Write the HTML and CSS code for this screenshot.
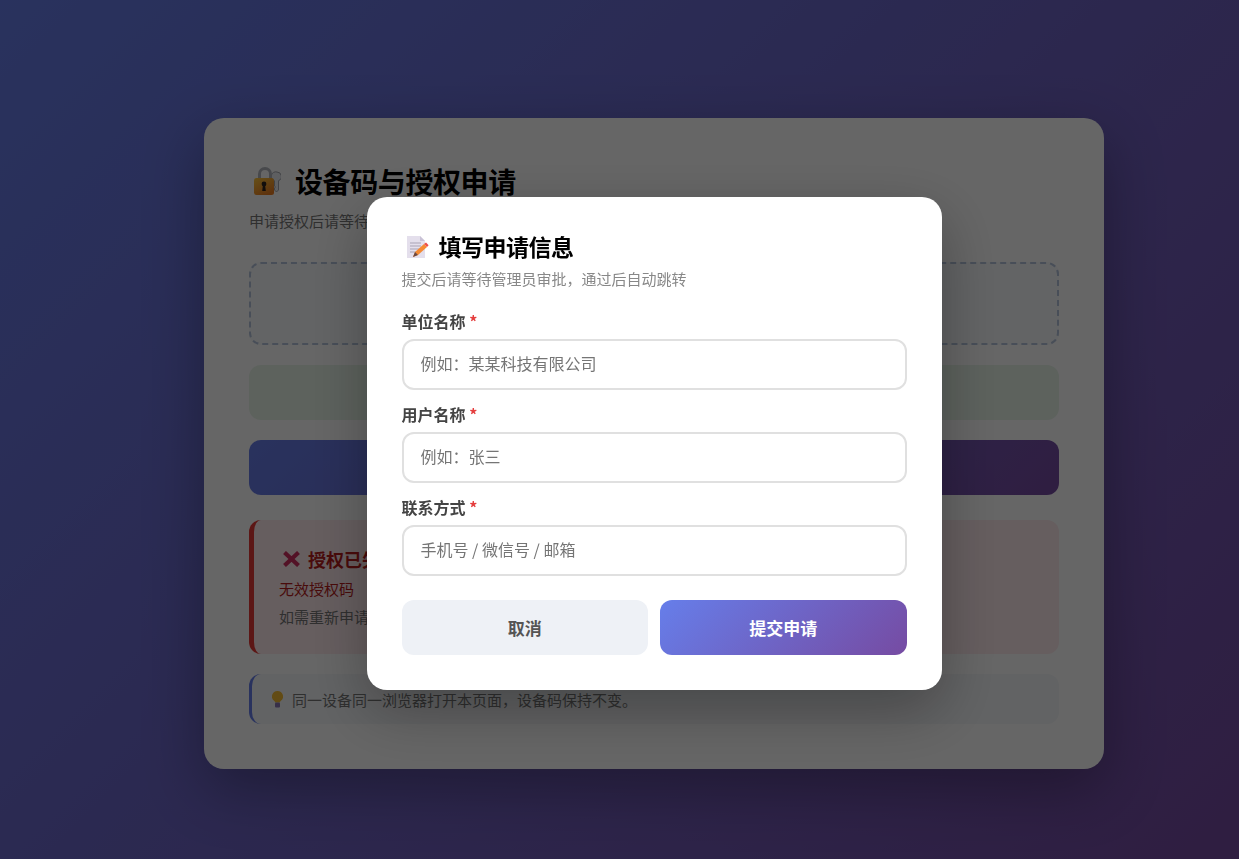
FILE: index.html
```html
<!DOCTYPE html>
<html lang="zh-CN">

<head>
    <meta charset="UTF-8">
    <meta name="viewport" content="width=device-width, initial-scale=1.0">
    <title>设备码与授权申请</title>
    <link rel="stylesheet" href="styles.css">
</head>

<body>
    <div class="card">
        <h1 class="card-title">
            <svg class="title-icon" viewBox="0 0 28 30">
                <defs>
                    <linearGradient id="lockBody" x1="0" y1="0" x2="0.6" y2="1">
                        <stop offset="0" stop-color="#ffc83d" />
                        <stop offset="1" stop-color="#ec7e22" />
                    </linearGradient>
                </defs>
                <path d="M24 6a4.500 4.500 0 0 1 1.500 8.700V24l-2 2-2-2v-2l1-1-1-1v-5.300A4.500 4.500 0 0 1 24 6z" fill="#eceef2" stroke="#8f929b" stroke-width="0.8" />
                <path d="M6.500 13V8a5.500 5.500 0 0 1 11 0v5" fill="none" stroke="#b4b7bf" stroke-width="3" />
                <rect x="1" y="12" width="20" height="17" rx="2.500" fill="url(#lockBody)" />
                <circle cx="11" cy="18" r="2.400" fill="#2e2420" />
                <path d="M10 18.500h2l.8 6.500H9.200z" fill="#2e2420" />
            </svg>
            设备码与授权申请
        </h1>
        <p class="card-sub">申请授权后请等待管理员审批，通过后自动跳转</p>

        <div class="code-box"></div>
        <div class="status-box"></div>
        <div class="apply-btn"></div>

        <div class="error-box">
            <div class="error-title">
                <svg class="error-icon" viewBox="0 0 17 16">
                    <path d="M1.500 1.500l14 13M15.500 1.500l-14 13" stroke="#d02f60" stroke-width="4.200" />
                </svg>
                授权已失效
            </div>
            <div class="error-reason">无效授权码</div>
            <div class="error-hint">如需重新申请，请点击上方按钮</div>
        </div>

        <div class="tip-box">
            <svg class="tip-icon" viewBox="0 0 11 17">
                <path d="M5.500 0a5.500 5.500 0 0 1 3.200 10c-.6.5-.9 1-.9 1.600H3.200c0-.6-.3-1.100-.9-1.600A5.500 5.500 0 0 1 5.500 0z" fill="#f4bb32" />
                <rect x="3" y="11.500" width="5" height="5" rx="1" fill="#8a76b5" />
            </svg>
            同一设备同一浏览器打开本页面，设备码保持不变。
        </div>
    </div>

    <div class="overlay">
        <div class="modal">
            <h2 class="modal-title">
                <svg class="modal-icon" viewBox="0 0 24 24">
                    <path d="M2 2h13l5 5v17H2z" fill="#e4dfec" />
                    <path d="M15 2l5 5h-5z" fill="#c9c2d6" />
                    <path d="M5 9h11M5 12h11M5 15h9M5 18h6" stroke="#a9a3b5" stroke-width="1" />
                    <path d="M8 23l2-5 9-8 3 3-9 8z" fill="#f58a33" />
                    <path d="M19 10l2-1.600 2.600 2.900L22 13z" fill="#ee4f4a" />
                    <path d="M8 23l2-5 3 3z" fill="#6b4a45" />
                </svg>
                填写申请信息
            </h2>
            <p class="modal-sub">提交后请等待管理员审批，通过后自动跳转</p>

            <div class="field">
                <label class="field-label">单位名称 <span class="required">*</span></label>
                <input class="field-input" type="text" placeholder="例如：某某科技有限公司">
            </div>
            <div class="field">
                <label class="field-label">用户名称 <span class="required">*</span></label>
                <input class="field-input" type="text" placeholder="例如：张三">
            </div>
            <div class="field">
                <label class="field-label">联系方式 <span class="required">*</span></label>
                <input class="field-input" type="text" placeholder="手机号 / 微信号 / 邮箱">
            </div>

            <div class="modal-actions">
                <button class="btn btn-cancel">取消</button>
                <button class="btn btn-submit">提交申请</button>
            </div>
        </div>
    </div>
</body>

</html>
```

FILE: styles.css
```css
* {
    box-sizing: border-box;
}

html,
body {
    height: 100%;
}

body {
    margin: 0;
    padding: 28px 0 0 69px;
    display: flex;
    align-items: center;
    justify-content: center;
    font-family: "Noto Sans CJK SC", "Noto Sans", sans-serif;
    background: linear-gradient(135deg, #667eea 0%, #764ba2 100%);
    overflow: hidden;
}

.card {
    width: 900px;
    height: 651px;
    flex-shrink: 0;
    padding: 45px;
    border-radius: 20px;
    background: #fff;
    box-shadow: 0 20px 60px rgba(0, 0, 0, 0.3);
}

.card-title {
    display: flex;
    align-items: center;
    margin: 0;
    font-size: 28px;
    line-height: 36px;
    font-weight: 700;
    letter-spacing: -0.4px;
    color: #000;
}

.title-icon {
    width: 28px;
    height: 30px;
    margin: 0 14px 0 4px;
}

.card-sub {
    margin: 12px 0 0;
    font-size: 15px;
    line-height: 20px;
    color: #777;
}

.code-box {
    height: 83px;
    margin-top: 31px;
    border: 2px dashed #b5c4dc;
    border-radius: 12px;
    background: #f7fafc;
}

.status-box {
    height: 55px;
    margin-top: 20px;
    border-radius: 12px;
    background: #e8f5e9;
}

.apply-btn {
    height: 55px;
    margin-top: 20px;
    border-radius: 12px;
    background: linear-gradient(135deg, #667eea 0%, #764ba2 100%);
}

.error-box {
    height: 134px;
    margin-top: 25px;
    padding: 25px;
    border-left: 5px solid #e53935;
    border-radius: 12px;
    background: #ffebee;
}

.error-title {
    display: flex;
    align-items: center;
    font-size: 18px;
    line-height: 28px;
    font-weight: 700;
    color: #b71c1c;
}

.error-icon {
    width: 17px;
    height: 16px;
    margin: 0 8px 0 4px;
}

.error-reason {
    margin-top: 5px;
    font-size: 15px;
    line-height: 22px;
    color: #b71c1c;
}

.error-hint {
    margin-top: 6px;
    font-size: 15px;
    line-height: 22px;
    color: #777;
}

.tip-box {
    height: 50px;
    margin-top: 20px;
    padding: 0 15px;
    display: flex;
    align-items: center;
    border-left: 3px solid #667eea;
    border-radius: 12px;
    background: #f5f7fa;
    font-size: 15px;
    color: #777;
}

.tip-icon {
    width: 11px;
    height: 17px;
    margin: 0 9px 0 5px;
}

.overlay {
    position: fixed;
    top: 0;
    left: 0;
    right: 0;
    bottom: 0;
    padding: 28px 0 0 69px;
    display: flex;
    align-items: center;
    justify-content: center;
    background: rgba(0, 0, 0, 0.6);
}

.modal {
    width: 575px;
    height: 493px;
    padding: 35px;
    border-radius: 20px;
    background: #fff;
    box-shadow: 0 20px 60px rgba(0, 0, 0, 0.3);
}

.modal-title {
    display: flex;
    align-items: center;
    margin: 0;
    font-size: 23px;
    line-height: 28px;
    font-weight: 700;
    letter-spacing: -0.5px;
    color: #000;
}

.modal-icon {
    width: 24px;
    height: 24px;
    margin: 0 10px 0 3px;
}

.modal-sub {
    margin: 9px 0 0;
    font-size: 15px;
    line-height: 20px;
    color: #888;
}

.field {
    margin-top: 21px;
}

.field + .field {
    margin-top: 13.4px;
}

.field-label {
    display: block;
    margin-bottom: 7px;
    font-size: 16px;
    line-height: 22px;
    font-weight: 600;
    color: #444;
}

.required {
    color: #e53e3e;
}

.field-input {
    display: block;
    width: 100%;
    height: 50.6px;
    padding: 0 17px 2px;
    border: 2px solid #e0e0e0;
    border-radius: 12px;
    background: #fff;
    font-family: inherit;
    font-size: 16px;
    color: #333;
}

.field-input::placeholder {
    color: #757575;
}

.modal-actions {
    display: flex;
    gap: 12px;
    margin-top: 24.4px;
}

.btn {
    flex: 1;
    height: 55px;
    border: none;
    border-radius: 12px;
    font-family: inherit;
    font-size: 17px;
    font-weight: 700;
    cursor: pointer;
}

.btn-cancel {
    background: #eef1f6;
    color: #555;
}

.btn-submit {
    background: linear-gradient(135deg, #667eea 0%, #764ba2 100%);
    color: #fff;
}
```
